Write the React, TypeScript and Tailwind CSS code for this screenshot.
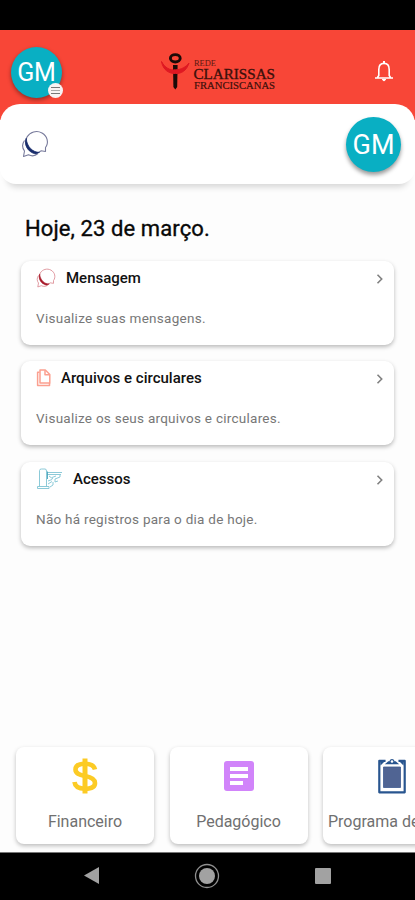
import React from "react";

function ChatIcon({ color, dark, className }: { color: string; dark: string; className: string }) {
  return (
    <svg viewBox="0 0 28 28" className={className} fill="none" stroke={color} strokeWidth="1.1" strokeLinejoin="round">
      <path d="M24.500 21.500 V17.500 C28 13 26.500 6 21 3 C15.500 0 9 2 6 7 C3 13 5.500 19.500 11 22 C14 23.300 18 22.800 20 20.800 Z" />
      <path d="M3.500 10.500 C1 14 1.200 18 3.500 21 L2.500 26.500 L7.500 24.800 C11 26.500 14.500 25.800 17 23.500" />
      <path d="M5.200 8.300 C2.500 15 7.500 22.500 14.500 24 L18.500 22.300 C12 22.500 6 17 5.200 8.300 Z" fill={dark} stroke={dark} strokeWidth="0.7" />
    </svg>
  );
}

function FilesIcon() {
  return (
    <svg viewBox="0 0 15 18" className="block h-[18px] w-[15px]" fill="none" stroke="#fba090" strokeWidth="1.500" strokeLinejoin="round">
      <path d="M4 1 H9.300 L13.800 5.500 V14 H4 Z" />
      <path d="M9 1.200 V5.800 H13.600 M3.500 3.300 H1.600 V16.600 H13.500 V14" />
    </svg>
  );
}

function GateIcon() {
  return (
    <svg viewBox="0 0 27 22" className="block h-[22px] w-[27px]" fill="none" stroke="#7fc4d4" strokeWidth="0.900">
      <path d="M3.500 18.500 V2.500 Q3.500 1 5.500 1 H9 Q10.500 1 10.500 3 V18.500 M1.500 18.500 H13 V20.500 H1.500 Z" />
      <path d="M11 4.500 H26 M11 6.500 H25 M13 8 L17 11 M20 8 L16 9.500 M24 7 V9 L19 11 V14 L22 13 M12 13 L16 11.500 M12 16 L16 13.500 M17 14 V17 L14 19" />
      <path d="M11.500 3.500 V11" stroke="#4ba4bc" />
    </svg>
  );
}

function Logo() {
  return (
    <svg viewBox="0 0 120 42" className="block h-[42px] w-[120px]" role="img" aria-label="Rede Clarissas Franciscanas">
      <path d="M13 14 H17.600 L17.200 36 L15.300 38.500 L13.400 36 Z" fill="#1b0b08" />
      <ellipse cx="15.300" cy="7.300" rx="4.900" ry="3.700" fill="none" stroke="#1b0b08" strokeWidth="2.900" />
      <path d="M1.500 10.500 C5 17 10 19.500 15.500 18.800 C21 18.800 26 16 29 12 C26.500 20 21 22.800 15.500 22.500 C9 22.800 3 19 1.500 10.500 Z" fill="#df1822" stroke="#df1822" />
      <g fill="#3b100b" fontFamily="Liberation Serif, serif">
        <text x="34" y="14.500" fontSize="8" textLength="22" lengthAdjust="spacingAndGlyphs" opacity=".85">REDE</text>
        <text x="33.500" y="27.500" fontSize="15.500" textLength="81.500" lengthAdjust="spacingAndGlyphs" stroke="#3b100b" strokeWidth=".35">CLARISSAS</text>
        <text x="34" y="38" fontSize="10.500" textLength="81" lengthAdjust="spacingAndGlyphs" stroke="#3b100b" strokeWidth=".2">FRANCISCANAS</text>
      </g>
    </svg>
  );
}

function Chevron() {
  return (
    <svg viewBox="0 0 8 12" className="mt-0.5 block h-3 w-2" fill="none" stroke="#808080" strokeWidth="1.600">
      <path d="M1.500 1.800 L5.700 6 L1.500 10.200" />
    </svg>
  );
}

function InfoCard({ icon, title, text, textSpacing }: {
  icon: React.ReactNode; title: string; text: string; textSpacing: string;
}) {
  return (
    <section className="h-[84px] rounded-[9px] bg-white pl-[15px] pr-[10px] shadow-[0_2px_4px_rgba(0,0,0,0.27)]">
      <div className="flex h-[34px] items-center justify-between">
        <div className="flex items-center gap-[10px]">
          {icon}
          <h2 className="whitespace-nowrap text-[15px] font-medium leading-5 text-[#111]">{title}</h2>
        </div>
        <Chevron />
      </div>
      <p className={`mt-[13px] whitespace-nowrap text-[13.500px] leading-5 text-[#777] ${textSpacing}`}>{text}</p>
    </section>
  );
}

function Shortcut({ icon, label, align }: { icon: React.ReactNode; label: string; align: string }) {
  return (
    <div className="flex h-[97px] w-[138px] shrink-0 flex-col items-center rounded-[8px] bg-white pt-[9px] shadow-[0_2px_4px_rgba(0,0,0,0.25)]">
      <div className="flex h-[40px] items-center">{icon}</div>
      <span className={`mt-[16px] whitespace-nowrap text-base leading-5 text-[#707070] ${align}`}>{label}</span>
    </div>
  );
}

export default function App() {
  return (
    <div className="flex h-[900px] w-[415px] flex-col overflow-hidden bg-[#fdfdfd] font-['Roboto',sans-serif]">
      <div className="h-[30px] shrink-0 bg-black" />
      <div className="h-[90px] shrink-0 bg-[#f84637]">
        <header className="flex h-[74px] items-start justify-between pl-[11px] pr-[21px]">
          <div className="relative mt-[17px] flex size-[51px] items-center justify-center rounded-full bg-[#09afc3] text-[25px] text-white shadow-[0_2px_4px_rgba(0,0,0,0.4)]">
            <span className="tracking-[-0.3px]">GM</span>
            <span className="absolute -right-px bottom-0 flex size-[15px] flex-col items-center justify-center gap-[2px] rounded-full bg-[#f7f3f3]">
              <i className="h-px w-[9px] bg-[#777]" />
              <i className="h-px w-[9px] bg-[#aaa]" />
              <i className="h-px w-[9px] bg-[#777]" />
            </span>
          </div>
          <div className="ml-[3px] mt-[21px]"><Logo /></div>
          <svg viewBox="0 0 20 23" className="mt-[30px] h-[23px] w-5" fill="none" stroke="#fff" strokeWidth="1.600">
            <path d="M1 18 H19 M3.500 17.500 L4.800 15.500 V9.500 C4.800 5.500 6.800 3.400 10 3.400 C13.200 3.400 15.200 5.500 15.200 9.500 V15.500 L16.500 17.500" />
            <path d="M10 3 V1" strokeWidth="2" />
            <path d="M8.200 19.500 H11.800 L10 21 Z" fill="#fff" strokeWidth="1" />
          </svg>
        </header>
      </div>
      <div className="-mt-4 flex h-[80px] shrink-0 items-center justify-between rounded-t-[20px] rounded-b-[16px] bg-white pl-[21px] pr-[14px] shadow-[0_10px_6px_-7px_rgba(0,0,0,0.16)]">
        <ChatIcon color="#777a9b" dark="#182c6c" className="block size-[28px]" />
        <div className="flex size-[55px] items-center justify-center rounded-full bg-[#09afc3] text-[27px] text-white shadow-[0_3px_4px_rgba(0,0,0,0.4)]"><span className="mt-0.5">GM</span></div>
      </div>
      <main className="px-[21px]">
        <h1 className="ml-1 mt-[31px] whitespace-nowrap text-[22px] font-normal leading-7 tracking-[0.1px] text-[#080808] [-webkit-text-stroke:0.35px_#080808]">Hoje, 23 de março.</h1>
        <div className="mt-[18px] flex flex-col gap-[16.300px]">
          <InfoCard icon={<ChatIcon color="#d9828b" dark="#a71929" className="block size-[20px]" />} title="Mensagem" text="Visualize suas mensagens." textSpacing="tracking-[0.28px]" />
          <InfoCard icon={<FilesIcon />} title="Arquivos e circulares" text="Visualize os seus arquivos e circulares." textSpacing="tracking-[0.26px]" />
          <InfoCard icon={<GateIcon />} title="Acessos" text="Não há registros para o dia de hoje." textSpacing="tracking-[0.26px]" />
        </div>
      </main>
      <nav className="mb-[8px] mt-auto flex shrink-0 gap-[15.500px] pl-4">
        <Shortcut label="Financeiro" align="tracking-normal" icon={
          <svg viewBox="0 0 28 36" className="h-9 w-7" fill="none" stroke="#fccb25" strokeWidth="4.600">
            <path d="M14 0.500 V35.500" strokeWidth="5" />
            <path d="M24 11.500 C23 7.500 19.500 5.700 14 5.700 C8 5.700 4.500 7.700 4.500 11.500 C4.500 15.500 8 16.800 14 18 C20.500 19.200 24 21 24 25 C24 28.800 20 30.700 14 30.700 C7.500 30.700 4 28.500 3.500 24" />
          </svg>
        } />
        <Shortcut label="Pedagógico" align="tracking-normal" icon={
          <svg viewBox="0 0 30 30" className="size-[30px]">
            <rect width="30" height="30" rx="3" fill="#d184fa" />
            <path d="M6 8 H24 M6 15 H24 M6 22 H19" stroke="white" strokeWidth="4" />
          </svg>
        } />
        <Shortcut label="Programa de" align="self-start pl-[5px]" icon={
          <svg viewBox="0 0 28 36" className="h-9 w-7">
            <path d="M1.300 2.800 H26.700 V34.300 H1.300 Z" fill="white" stroke="#28558f" strokeWidth="2.200" strokeLinejoin="round" />
            <path d="M7.500 0 H20.500 V4 H7.500 Z" fill="white" />
            <path d="M5.500 9 H22.500 V29.500 H5.500 Z" fill="#506493" stroke="#3d5b90" strokeWidth="0.800" />
            <path d="M2 2.500 H7.500 L2.500 7.500 Z M26 2.500 H20.500 L25.500 7.500 Z" fill="#28558f" />
            <path d="M6.800 6.300 L10.300 3.300 H11.500 C12 0.300 16 0.300 16.500 3.300 H17.700 L21.200 6.300 Z" fill="#28558f" />
            <circle cx="14" cy="3.500" r="1.300" fill="white" />
          </svg>
        } />
      </nav>
      <footer className="flex h-[48px] shrink-0 items-center justify-between border-t border-[#777] bg-black pb-0.5 pl-[84px] pr-[84px]">
        <svg viewBox="0 0 15 17" className="h-[17px] w-[15px]"><path d="M0 8.500 L15 0 V17 Z" fill="#a2a2a2" /></svg>
        <svg viewBox="0 0 26 26" className="size-[26px]"><circle cx="13" cy="13" r="11.500" fill="none" stroke="#909090" strokeWidth="1.300" /><circle cx="13" cy="13" r="8" fill="#a2a2a2" /></svg>
        <span className="size-4 rounded-[1px] bg-[#a2a2a2]" />
      </footer>
    </div>
  );
}
